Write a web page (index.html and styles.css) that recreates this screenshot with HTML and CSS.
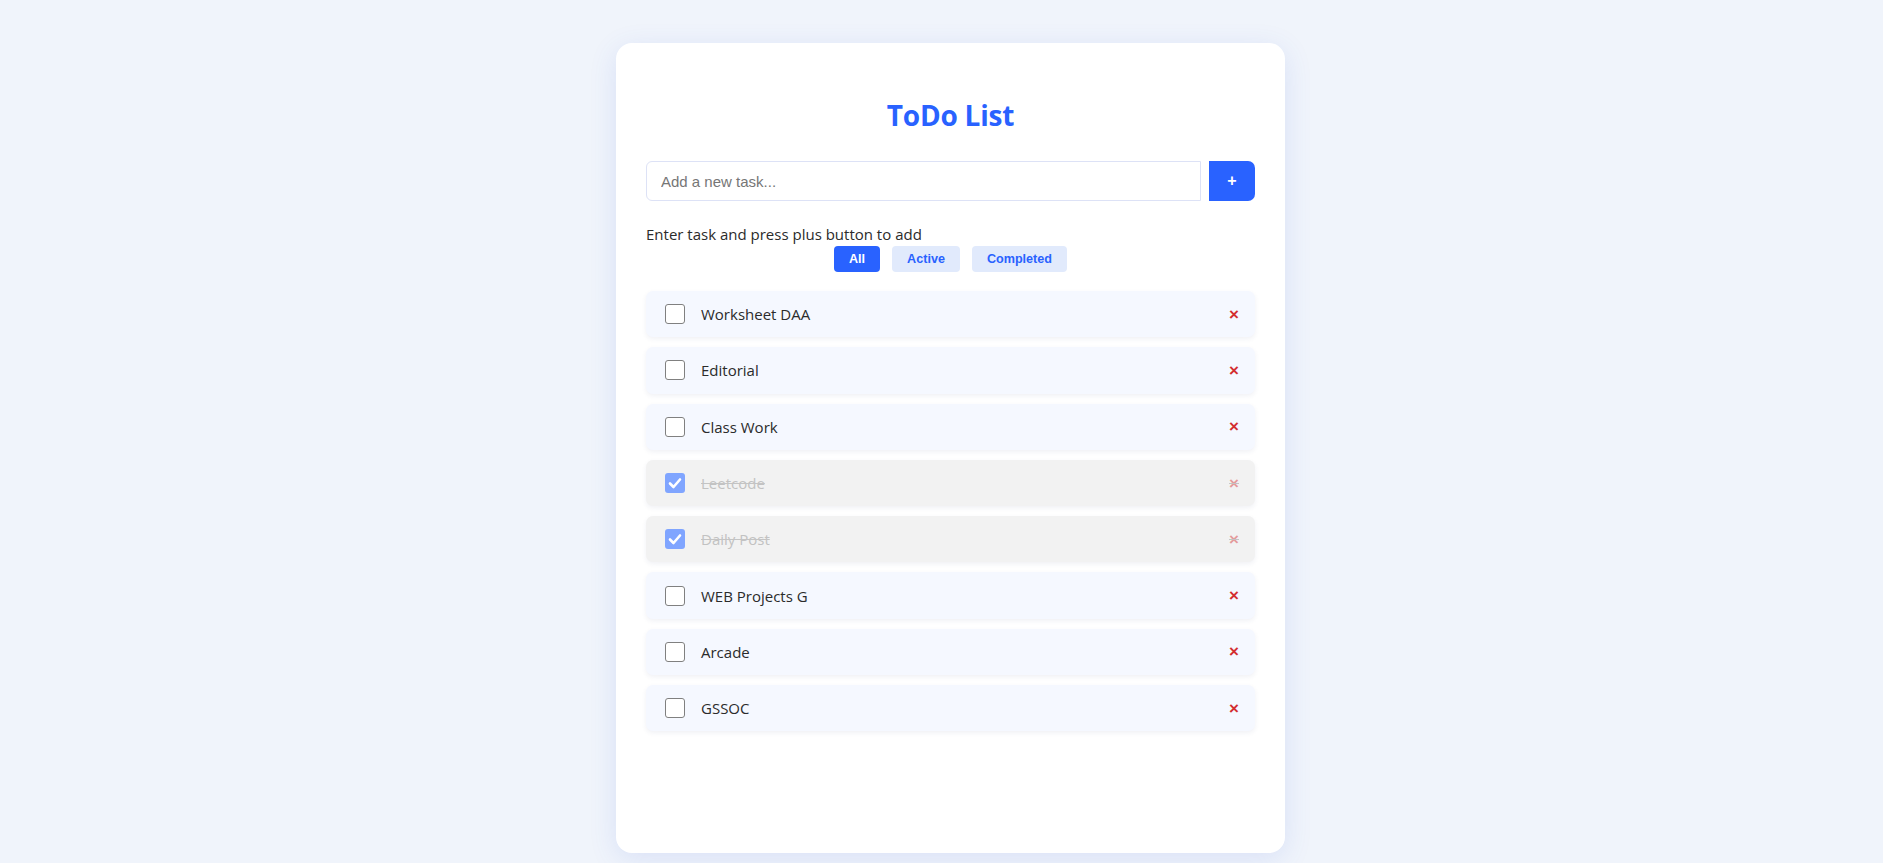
FILE: index.html
```html
<!DOCTYPE html>
<html lang="en">
<head>
<meta charset="utf-8">
<title>ToDo List</title>
<link rel="stylesheet" href="styles.css">
</head>
<body>
<div class="page">
  <main class="card">
    <h1 class="title">ToDo List</h1>
    <div class="add-row">
      <input class="task-input" type="text" placeholder="Add a new task...">
      <button class="add-btn" type="button">+</button>
    </div>
    <p class="hint">Enter task and press plus button to add</p>
    <div class="filters">
      <button class="filter active" type="button">All</button>
      <button class="filter" type="button">Active</button>
      <button class="filter" type="button">Completed</button>
    </div>
    <ul class="tasks">
      <li class="task"><span class="check"></span><span class="label">Worksheet DAA</span><span class="del">×</span></li>
      <li class="task"><span class="check"></span><span class="label">Editorial</span><span class="del">×</span></li>
      <li class="task"><span class="check"></span><span class="label">Class Work</span><span class="del">×</span></li>
      <li class="task done"><span class="check"><svg viewBox="0 0 20 20" width="20" height="20"><path d="M5 10.5 L8.5 14 L15 6.5" fill="none" stroke="#fff" stroke-width="2.6" stroke-linecap="round" stroke-linejoin="round"/></svg></span><span class="label">Leetcode</span><span class="del">×</span></li>
      <li class="task done"><span class="check"><svg viewBox="0 0 20 20" width="20" height="20"><path d="M5 10.5 L8.5 14 L15 6.5" fill="none" stroke="#fff" stroke-width="2.6" stroke-linecap="round" stroke-linejoin="round"/></svg></span><span class="label">Daily Post</span><span class="del">×</span></li>
      <li class="task"><span class="check"></span><span class="label">WEB Projects G</span><span class="del">×</span></li>
      <li class="task"><span class="check"></span><span class="label">Arcade</span><span class="del">×</span></li>
      <li class="task"><span class="check"></span><span class="label">GSSOC</span><span class="del">×</span></li>
    </ul>
  </main>
</div>
</body>
</html>
```
FILE: styles.css
```css
html, body {
  margin: 0;
  padding: 0;
}
body {
  background: #f0f4fb;
  font-family: "Open Sans", "Noto Sans", sans-serif;
  color: #2b2b2b;
  min-height: 863px;
}
.page {
  display: flex;
  justify-content: center;
  padding: 43px 0 0 18px;
}
.card {
  box-sizing: border-box;
  width: 669px;
  height: 810px;
  padding: 30px;
  background: #ffffff;
  border-radius: 16px;
  box-shadow: 0 6px 28px rgba(60, 100, 220, 0.13);
}
.title {
  margin: 23px 0 27px;
  font-size: 28px;
  line-height: 38px;
  font-weight: 700;
  text-align: center;
  color: #2962ff;
  letter-spacing: -0.2px;
}
.add-row {
  display: flex;
  gap: 8px;
  height: 40px;
}
.task-input {
  flex: 1;
  box-sizing: border-box;
  height: 40px;
  margin: 0;
  padding: 0 14px;
  border: 1px solid #dde2f6;
  border-radius: 6px 0 0 6px;
  font-family: "Liberation Sans", Arial, sans-serif;
  font-size: 15px;
  color: #333;
  outline: none;
}
.task-input::placeholder {
  color: #767676;
}
.add-btn {
  width: 46px;
  height: 40px;
  margin: 0;
  padding: 0;
  border: none;
  border-radius: 0 7px 7px 0;
  background: #2962ff;
  color: #fff;
  font-family: "Liberation Sans", Arial, sans-serif;
  font-weight: 700;
  font-size: 16px;
}
.hint {
  margin: 23px 0 0;
  font-size: 15px;
  line-height: 20px;
  color: #2b2b2b;
}
.filters {
  display: flex;
  justify-content: center;
  gap: 12px;
  margin-top: 2px;
}
.filter {
  height: 26px;
  margin: 0;
  padding: 0 15px;
  border: none;
  border-radius: 4px;
  background: #e1eafc;
  color: #2962ff;
  font-family: "Liberation Sans", Arial, sans-serif;
  font-weight: 700;
  font-size: 12.6px;
}
.filter.active {
  background: #2962ff;
  color: #fff;
}
.tasks {
  list-style: none;
  margin: 19px 0 0;
  padding: 0;
}
.task {
  display: flex;
  align-items: center;
  box-sizing: border-box;
  height: 46.3px;
  margin-bottom: 10px;
  padding: 0 16px 0 19px;
  background: #f5f8ff;
  border-radius: 7px;
  box-shadow: 0 2px 5px rgba(40, 60, 120, 0.07);
  font-size: 15px;
}
.check {
  box-sizing: border-box;
  width: 20px;
  height: 20px;
  margin-right: 16px;
  border: 1.5px solid #808080;
  border-radius: 3px;
  background: #fff;
  flex: none;
}
.check svg {
  display: block;
  margin: -1.5px;
}
.label {
  flex: 1;
  color: #2b2b2b;
}
.del {
  color: #d32f2f;
  font-family: "Liberation Sans", Arial, sans-serif;
  font-weight: 700;
  font-size: 17px;
  line-height: 1;
}
.task.done {
  background: #f2f2f2;
  text-decoration: line-through;
  text-decoration-color: #c4c4c4;
}
.task.done .check {
  border: none;
  background: #80a5ff;
}
.task.done .check svg {
  margin: 0;
}
.task.done .label {
  color: #c2c2c2;
}
.task.done .del {
  color: rgba(211, 47, 47, 0.45);
}
```
